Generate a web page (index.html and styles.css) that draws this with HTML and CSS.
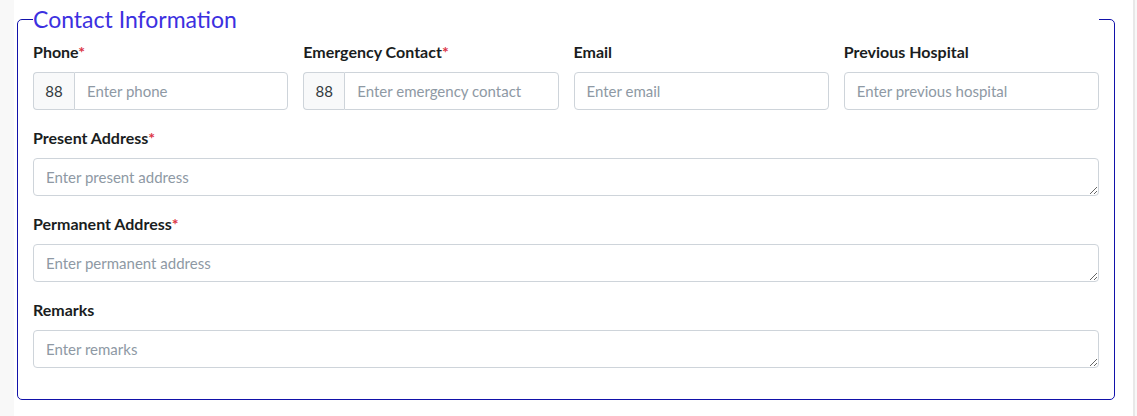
FILE: index.html
```html
<!DOCTYPE html>
<html lang="en">
<head>
<meta charset="utf-8">
<title>Contact Information</title>
<link rel="stylesheet" href="styles.css">
</head>
<body>
<div class="page">
  <fieldset class="section">
    <legend class="section-title">Contact Information</legend>
    <div class="grid4">
      <div class="group">
        <label class="label">Phone<span class="req">*</span></label>
        <div class="input-group">
          <span class="prefix">88</span>
          <input class="control joined" type="text" placeholder="Enter phone">
        </div>
      </div>
      <div class="group">
        <label class="label">Emergency Contact<span class="req">*</span></label>
        <div class="input-group">
          <span class="prefix">88</span>
          <input class="control joined" type="text" placeholder="Enter emergency contact">
        </div>
      </div>
      <div class="group">
        <label class="label">Email</label>
        <input class="control" type="text" placeholder="Enter email">
      </div>
      <div class="group">
        <label class="label">Previous Hospital</label>
        <input class="control" type="text" placeholder="Enter previous hospital">
      </div>
    </div>
    <div class="group">
      <label class="label">Present Address<span class="req">*</span></label>
      <textarea class="control area" rows="1" placeholder="Enter present address"></textarea>
    </div>
    <div class="group">
      <label class="label">Permanent Address<span class="req">*</span></label>
      <textarea class="control area" rows="1" placeholder="Enter permanent address"></textarea>
    </div>
    <div class="group">
      <label class="label">Remarks</label>
      <textarea class="control area" rows="1" placeholder="Enter remarks"></textarea>
    </div>
  </fieldset>
</div>
</body>
</html>
```

FILE: styles.css
```css
* { box-sizing: border-box; }
html, body { margin: 0; padding: 0; }
body {
  background: #f8f8f8;
  font-family: "Lato", "Noto Sans", sans-serif;
  color: #212529;
  height: 416px;
  overflow: hidden;
}
.page {
  margin-left: 14px;
  width: 1121px;
  height: 416px;
  background: #ffffff;
  border-right: 2px solid #e8e8e8;
  padding: 3px 0 0 3px;
}
.section {
  margin: 0;
  width: 1098px;
  border: 1px solid #1212aa;
  border-radius: 5px;
  padding: 0 15px 15px 15px;
  min-width: 0;
}
.section-title {
  width: 100%;
  padding: 0;
  margin: 0 0 5px 0;
  font-size: 23px;
  line-height: 32px;
  color: #3c30e0;
  font-weight: 400;
}
.grid4 {
  display: grid;
  grid-template-columns: repeat(4, 1fr);
  column-gap: 15px;
}
.group { margin-bottom: 16px; }
.label {
  display: block;
  font-size: 16px;
  font-weight: 700;
  line-height: 24px;
  margin-bottom: 8px;
  color: #1a1d21;
}
.req { color: #dc3545; }
.input-group { display: flex; }
.prefix {
  display: flex;
  align-items: center;
  justify-content: center;
  width: 41px;
  height: 38px;
  background: #f8f9fa;
  border: 1px solid #ced4da;
  border-right: none;
  border-radius: 4px 0 0 4px;
  font-size: 15px;
  color: #333a40;
}
.control {
  display: block;
  width: 100%;
  height: 38px;
  padding: 6px 12px;
  font-family: inherit;
  font-size: 15px;
  line-height: 22px;
  color: #212529;
  background: #fff;
  border: 1px solid #ced4da;
  border-radius: 4px;
  outline: none;
}
.control::placeholder { color: #8e99a4; }
.joined {
  flex: 1;
  min-width: 0;
  border-radius: 0 4px 4px 0;
}
.area {
  resize: vertical;
  min-height: 38px;
  padding-top: 7px;
}
```
